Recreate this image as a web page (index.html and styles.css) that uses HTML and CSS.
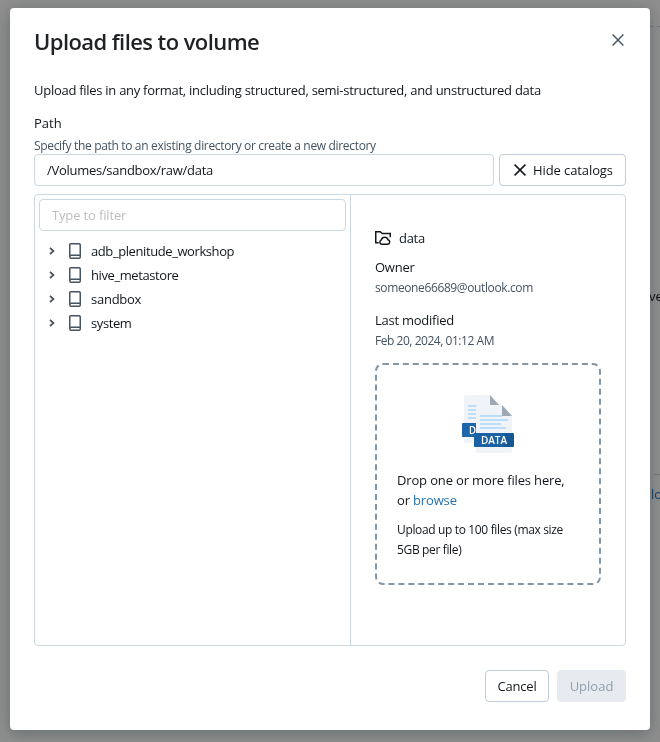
FILE: index.html
```html
<!DOCTYPE html>
<html lang="en">
<head>
<meta charset="utf-8">
<title>Upload files to volume</title>
<link rel="stylesheet" href="styles.css">
</head>
<body>
<div class="backdrop" aria-hidden="true">
  <span class="rule rule-top"></span>
  <span class="behind-text">ve</span>
  <span class="rule rule-low"></span>
  <span class="behind-link">lo</span>
</div>
<main class="modal">
  <header class="head">
    <h1>Upload files to volume</h1>
    <svg class="close" viewBox="0 0 12 12"><path d="M.6.6l10.8 10.8M11.4.6L.6 11.4"/></svg>
  </header>
  <p class="intro">Upload files in any format, including structured, semi-structured, and unstructured data</p>
  <label class="label">Path</label>
  <p class="hint">Specify the path to an existing directory or create a new directory</p>
  <div class="path-row">
    <div class="input path">/Volumes/sandbox/raw/data</div>
    <button class="btn toggle"><svg class="x" viewBox="0 0 12 12"><path d="M.6.6l10.8 10.8M11.4.6L.6 11.4"/></svg><span>Hide catalogs</span></button>
  </div>
  <section class="browser">
    <div class="tree">
      <div class="input filter">Type to filter</div>
      <ul>
        <li><svg class="chev" viewBox="0 0 6 8"><path d="M1 .8L4.4 4 1 7.2"/></svg><svg class="book" viewBox="0 0 12 16"><path d="M1.9.75h8.2A1.15 1.15 0 0 1 11.25 1.9v12.2a1.15 1.15 0 0 1-1.15 1.15H2.3A1.55 1.55 0 0 1 .75 13.7V1.9A1.15 1.15 0 0 1 1.9.75zM.75 13.7A1.5 1.5 0 0 1 2.3 12.2h8.95"/></svg><span class="tight">adb_plenitude_workshop</span></li>
        <li><svg class="chev" viewBox="0 0 6 8"><path d="M1 .8L4.4 4 1 7.2"/></svg><svg class="book" viewBox="0 0 12 16"><path d="M1.9.75h8.2A1.15 1.15 0 0 1 11.25 1.9v12.2a1.15 1.15 0 0 1-1.15 1.15H2.3A1.55 1.55 0 0 1 .75 13.7V1.9A1.15 1.15 0 0 1 1.9.75zM.75 13.7A1.5 1.5 0 0 1 2.3 12.2h8.95"/></svg><span class="tight">hive_metastore</span></li>
        <li><svg class="chev" viewBox="0 0 6 8"><path d="M1 .8L4.4 4 1 7.2"/></svg><svg class="book" viewBox="0 0 12 16"><path d="M1.9.75h8.2A1.15 1.15 0 0 1 11.25 1.9v12.2a1.15 1.15 0 0 1-1.15 1.15H2.3A1.55 1.55 0 0 1 .75 13.7V1.9A1.15 1.15 0 0 1 1.9.75zM.75 13.7A1.5 1.5 0 0 1 2.3 12.2h8.95"/></svg><span class="loose">sandbox</span></li>
        <li><svg class="chev" viewBox="0 0 6 8"><path d="M1 .8L4.4 4 1 7.2"/></svg><svg class="book" viewBox="0 0 12 16"><path d="M1.9.75h8.2A1.15 1.15 0 0 1 11.25 1.9v12.2a1.15 1.15 0 0 1-1.15 1.15H2.3A1.55 1.55 0 0 1 .75 13.7V1.9A1.15 1.15 0 0 1 1.9.75zM.75 13.7A1.5 1.5 0 0 1 2.3 12.2h8.95"/></svg><span class="tight">system</span></li>
      </ul>
    </div>
    <div class="detail">
      <div class="name"><svg class="folder" viewBox="0 0 16 14"><path d="M3.8 11.7H.75V.75h4.5l1.9 1.7h8.1v3.8"/><path d="M7 13.2a2.2 2.2 0 0 1-.6-4.3 3.4 3.4 0 0 1 6.6-.1 2.25 2.25 0 0 1-.1 4.4z"/></svg><span>data</span></div>
      <div class="key">Owner</div>
      <div class="value">someone66689@outlook.com</div>
      <div class="key second">Last modified</div>
      <div class="value date">Feb 20, 2024, 01:12 AM</div>
      <div class="drop">
        <svg class="docs" viewBox="0 0 52 58">
          <path fill="#f0f4f8" d="M4 0h24l9 10v38H4a2 2 0 0 1-2-2V2a2 2 0 0 1 2-2z"/>
          <path fill="#9da9b5" d="M28 0l9 10h-9z"/>
          <path stroke="#bbdefb" stroke-width="2" d="M6 11h10M6 15h8M6 19h8M6 23h8"/>
          <rect y="28" width="18" height="14" rx="1" fill="#1d66aa"/>
          <text x="7" y="39" textLength="7" lengthAdjust="spacingAndGlyphs">D</text>
          <path fill="#f0f4f8" d="M16 10h24l10 11v35a2 2 0 0 1-2 2H16a2 2 0 0 1-2-2V12a2 2 0 0 1 2-2z"/>
          <path fill="#9da9b5" d="M40 10l10 11H40z"/>
          <path stroke="#bbdefb" stroke-width="2" d="M18 21h22M18 25h28M18 29h21M18 33h26"/>
          <rect x="12" y="38" width="40" height="14" rx="1.3" fill="#165893"/>
          <rect x="12" y="38" width="30" height="14" rx="1.3" fill="#1b62a2"/>
          <text x="19" y="49" textLength="26">DATA</text>
        </svg>
        <p class="drop-main">Drop one or more files here,<br>or <a>browse</a></p>
        <p class="drop-note">Upload up to 100 files (max size<br>5GB per file)</p>
      </div>
    </div>
  </section>
  <footer class="foot">
    <button class="btn cancel">Cancel</button>
    <button class="btn upload" disabled>Upload</button>
  </footer>
</main>
</body>
</html>
```
FILE: styles.css
```css
* { box-sizing: border-box; }
body {
  margin: 0;
  width: 660px;
  height: 742px;
  overflow: hidden;
  padding: 8px 10px 12px;
  background: #8e8e8e;
  font: 13px/20px "Open Sans", "Noto Sans", sans-serif;
  color: #11171c;
}
h1, p, ul { margin: 0; padding: 0; }
svg { display: block; flex: none; fill: none; }
h1, p, span { white-space: nowrap; }
.backdrop { position: fixed; inset: 0; }
.backdrop span { position: absolute; }
.rule { height: 1px; background: #72777b; }
.rule-top { left: 650px; top: 26px; width: 10px; background: repeating-linear-gradient(90deg, #72777b 0 3px, transparent 3px 7px); }
.rule-low { left: 654px; top: 474px; width: 6px; }
.behind-text { left: 649px; top: 286px; color: #090c0f; }
.behind-link { left: 651px; top: 484px; color: #123f66; }
.modal {
  position: relative;
  width: 640px;
  height: 722px;
  padding: 20px 24px 28px;
  background: #fff;
  border-radius: 4px;
  box-shadow: 0 6px 16px rgba(27, 49, 57, .2), 0 0 14px rgba(27, 49, 57, .12);
}
.head { display: flex; justify-content: space-between; height: 52px; }
h1 { font-size: 22px; line-height: 26px; font-weight: 600; letter-spacing: -.58px; color: #1f2224; }
.close { width: 12px; height: 12px; margin: 6px 2px 0 0; stroke: #445461; stroke-width: 1.4; }
.intro { letter-spacing: -.275px; }
.label { display: block; margin-top: 13px; }
.hint { font-size: 12px; line-height: 20px; margin-top: 3px; color: #44535f; height: 18px; letter-spacing: -.33px; }
.path-row { display: grid; grid-template-columns: 460px 127px; gap: 5px; }
.input { display: flex; align-items: center; height: 32px; border: 1px solid #cbd8e1; border-radius: 4px; padding: 0 12px; }
.path { letter-spacing: -.28px; }
.btn {
  display: flex;
  align-items: center;
  justify-content: center;
  height: 32px;
  padding: 0;
  border: 1px solid #c0cdd8;
  border-radius: 4px;
  background: #fff;
  font: inherit;
  color: inherit;
}
.toggle { gap: 7px; padding-left: 2px; letter-spacing: -.1px; }
.x { width: 12px; height: 12px; stroke: #11171c; stroke-width: 1.5; }
.browser {
  display: grid;
  grid-template-columns: 315px 1fr;
  width: 592px;
  height: 452px;
  margin-top: 8px;
  border: 1px solid #cbd8e1;
  border-radius: 4px;
}
.tree { padding: 4px; border-right: 1px solid #cbd8e1; width: 316px; }
.filter { width: 307px; color: #bfbfbf; letter-spacing: -.15px; }
ul { list-style: none; padding: 8px 0 0 10px; }
li { display: flex; align-items: center; height: 24px; }
.tight { letter-spacing: -.41px; }
.loose { letter-spacing: -.25px; }
.chev { width: 6px; height: 8px; stroke: #445461; stroke-width: 1.8; }
.book { width: 12px; height: 16px; margin: 0 10px 0 14px; stroke: #445461; stroke-width: 1.5; }
.detail { padding: 33px 24px 0 25px; }
.name { display: flex; align-items: center; gap: 8px; height: 20px; letter-spacing: -.3px; }
.folder { width: 16px; height: 14px; stroke: #11171c; stroke-width: 1.5; }
.key { margin-top: 9px; letter-spacing: -.25px; }
.key.second { margin-top: 12px; }
.value { font-size: 12px; line-height: 20px; padding-top: 1px; color: #44535f; letter-spacing: -.38px; }
.date { letter-spacing: -.46px; }
.drop {
  width: 226px;
  height: 222px;
  margin-top: 12px;
  padding: 30px 20px 0;
  border: 2px dashed #8396a5;
  border-radius: 8px;
}
.docs { width: 52px; height: 58px; margin-left: 65px; }
.docs text { font: 600 10px "Open Sans", sans-serif; fill: #fff; }
.drop-main { margin-top: 17px; letter-spacing: -.15px; }
.drop-main a { color: #2272b4; }
.drop-note { margin-top: 10px; font-size: 12px; letter-spacing: -.35px; }
.foot { display: flex; justify-content: flex-end; gap: 8px; margin-top: 24px; }
.cancel { width: 64px; letter-spacing: -.2px; }
.upload { width: 69px; background: #e7ebef; border-color: #e7ebef; color: #8fa0ad; }
```
